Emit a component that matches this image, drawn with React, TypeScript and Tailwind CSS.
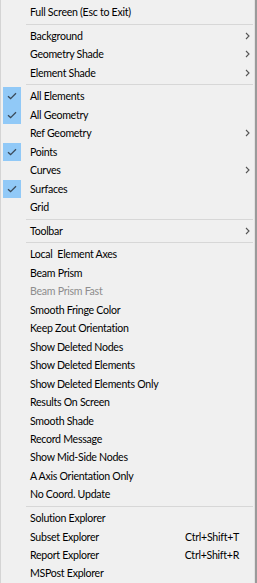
import React from 'react';

type Item =
  | { kind: 'sep' }
  | { kind: 'item'; label: string; checked?: boolean; sub?: boolean; disabled?: boolean; shortcut?: string };

const it = (label: string, extra: Partial<Omit<Extract<Item, { kind: 'item' }>, 'kind' | 'label'>> = {}): Item => ({
  kind: 'item',
  label,
  ...extra,
});
const sep: Item = { kind: 'sep' };

const items: Item[] = [
  it('Full Screen (Esc to Exit)'),
  sep,
  it('Background', { sub: true }),
  it('Geometry Shade', { sub: true }),
  it('Element Shade', { sub: true }),
  sep,
  it('All Elements', { checked: true }),
  it('All Geometry', { checked: true }),
  it('Ref Geometry', { sub: true }),
  it('Points', { checked: true }),
  it('Curves', { sub: true }),
  it('Surfaces', { checked: true }),
  it('Grid'),
  sep,
  it('Toolbar', { sub: true }),
  sep,
  it('Local  Element Axes'),
  it('Beam Prism'),
  it('Beam Prism Fast', { disabled: true }),
  it('Smooth Fringe Color'),
  it('Keep Zout Orientation'),
  it('Show Deleted Nodes'),
  it('Show Deleted Elements'),
  it('Show Deleted Elements Only'),
  it('Results On Screen'),
  it('Smooth Shade'),
  it('Record Message'),
  it('Show Mid-Side Nodes'),
  it('A Axis Orientation Only'),
  it('No Coord. Update'),
  sep,
  it('Solution Explorer'),
  it('Subset Explorer', { shortcut: 'Ctrl+Shift+T' }),
  it('Report Explorer', { shortcut: 'Ctrl+Shift+R' }),
  it('MSPost Explorer'),
];

const Check = () => (
  <svg width="10" height="8" viewBox="0 0 10 8" fill="none">
    <path d="M1 4.2 L3.6 6.6 L9 1.2" stroke="#3a4a5a" strokeWidth="1.3" />
  </svg>
);

const Chevron = () => (
  <svg width="5" height="8" viewBox="0 0 5 8" fill="none">
    <path d="M1 1 L4 4 L1 7" stroke="#555" strokeWidth="1.1" />
  </svg>
);

export default function App() {
  return (
    <div className="flex h-[583px] w-[257px] bg-[#f0f0f0] font-['Lato','Noto_Sans',sans-serif]">
      <div className="flex h-full flex-1 flex-col overflow-hidden border-l border-[#d4d4d4] pt-[3px]">
        {items.map((entry, i) =>
          entry.kind === 'sep' ? (
            <div key={i} className="flex h-[5.2px] items-center pl-[25px] pr-[1px]">
              <div className="h-px flex-1 bg-[#d7d7d7]" />
            </div>
          ) : (
            <div key={i} className="flex h-[18.47px] shrink-0 items-center text-[10.6px] leading-none tracking-[-0.28px]">
              <div className="flex h-full w-[25px] shrink-0 items-center pl-[2px]">
                {entry.checked && (
                  <div className="flex h-full w-[18px] items-center justify-center bg-[#91c9f7]">
                    <Check />
                  </div>
                )}
              </div>
              <span
                className={`flex-1 whitespace-pre pl-[4px] ${entry.disabled ? 'text-[#8d8d8d]' : 'text-black'}`}
              >
                {entry.label}
              </span>
              {entry.shortcut && <span className="text-black">{entry.shortcut}</span>}
              <div className="flex w-[15px] shrink-0 items-center justify-center pl-[1px]">
                {entry.sub && <Chevron />}
              </div>
            </div>
          ),
        )}
      </div>
      <div className="h-full w-px bg-[#e2e2e2]" />
      <div className="h-full w-[2px] bg-[#9a9a9a]" />
    </div>
  );
}
